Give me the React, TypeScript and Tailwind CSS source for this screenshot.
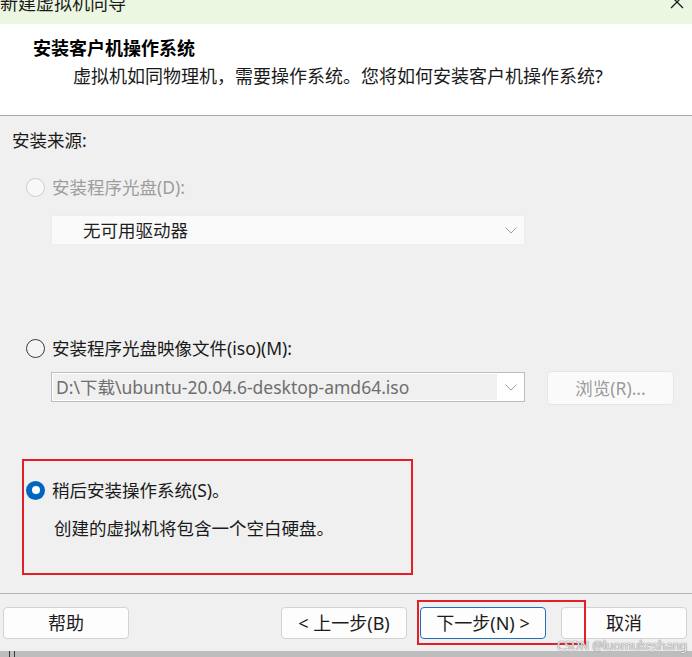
import React from 'react';

const FONT = { fontFamily: '"Noto Sans", "Noto Sans CJK SC", sans-serif' };

const Chevron: React.FC = () => (
  <svg width="12" height="7" viewBox="0 0 12 7" className="shrink-0">
    <path d="M0.5 0.5 L6 6 L11.5 0.5" fill="none" stroke="#a0a0a0" strokeWidth="1" />
  </svg>
);

const Radio: React.FC<{ state: 'disabled' | 'off' | 'on' }> = ({ state }) => {
  if (state === 'on') {
    return (
      <div className="w-[19px] h-[19px] rounded-full bg-[#0067c0] flex items-center justify-center shrink-0">
        <div className="w-[8px] h-[8px] rounded-full bg-white" />
      </div>
    );
  }
  if (state === 'disabled') {
    return <div className="w-[19px] h-[19px] rounded-full border border-[#cdcdcd] bg-[#f8f8f8] shrink-0" />;
  }
  return <div className="w-[19px] h-[19px] rounded-full border border-[#3a3a3a] bg-[#f4f4f4] shrink-0" />;
};

const WizardButton: React.FC<{ label: string; className?: string; primary?: boolean }> = ({ label, className = '', primary }) => (
  <button
    className={`h-[32px] w-[126px] rounded-[4px] bg-[#fdfdfd] text-[18px] text-[#1b1b1b] flex items-center justify-center border ${
      primary ? 'border-[#1f6fbf]' : 'border-[#d3d3d3]'
    } ${className}`}
  >
    {label}
  </button>
);

export default function App() {
  return (
    <div className="w-[692px] h-[657px] overflow-hidden bg-[#f0f0f0] flex flex-col relative" style={FONT}>
      {/* Title bar */}
      <div className="h-[24px] bg-[#ecf7e2] relative overflow-hidden shrink-0">
        <div className="text-[18px] leading-[18px] text-[#1a1a1a] -mt-[6px]">新建虚拟机向导</div>
        <svg width="16" height="16" viewBox="0 0 16 16" className="absolute right-[7px] -top-[6px]">
          <path d="M2 2 L14 14 M14 2 L2 14" stroke="#1a1a1a" strokeWidth="1.3" />
        </svg>
      </div>

      {/* Header */}
      <div className="h-[92px] bg-white border-b border-[#a9a9a9] shrink-0 pt-[13px]">
        <div className="pl-[33px] text-[18px] leading-[22px] font-bold text-black">安装客户机操作系统</div>
        <div className="pl-[73px] mt-[6px] text-[18px] leading-[22px] text-[#1a1a1a]">
          虚拟机如同物理机，需要操作系统。您将如何安装客户机操作系统?
        </div>
      </div>

      {/* Body */}
      <div className="h-[477px] shrink-0 flex flex-col">
        <div className="pl-[12px] mt-[14px] text-[17.5px] leading-[20px] text-[#1a1a1a]">安装来源:</div>

        <div className="flex items-center h-[20px] mt-[27px] pl-[26px] gap-[7px]">
          <Radio state="disabled" />
          <span className="text-[17.5px] text-[#9d9d9d]">安装程序光盘(D):</span>
        </div>

        <div className="ml-[51px] mt-[18px] w-[474px] h-[30px] bg-[#fafafa] border border-[#ededed] flex items-center pl-[31px] pr-[7px]">
          <span className="flex-1 text-[17.5px] text-[#1f1f1f]">无可用驱动器</span>
          <Chevron />
        </div>

        <div className="flex items-center h-[20px] mt-[93px] pl-[26px] gap-[7px]">
          <Radio state="off" />
          <span className="text-[17.5px] text-[#1a1a1a]">安装程序光盘映像文件(iso)(M):</span>
        </div>

        <div className="flex items-start ml-[51px] mt-[13px] gap-[22px]">
          <div className="mt-[1px] w-[474px] h-[30px] bg-white border border-[#bdbdbd] flex items-center p-[1px] pr-[7px]">
            <div className="w-[444px] h-full bg-[#f0f0f0] flex items-center pl-[3px] text-[17.5px] text-[#6e6e6e] whitespace-nowrap overflow-hidden">
              D:\下载\ubuntu-20.04.6-desktop-amd64.iso
            </div>
            <div className="flex-1 flex justify-end">
              <Chevron />
            </div>
          </div>
          <button className="w-[127px] h-[34px] rounded-[4px] bg-[#fafafa] border border-[#e6e6e6] text-[17.5px] text-[#9b9b9b] flex items-center justify-center">
            浏览(R)...
          </button>
        </div>

        <div className="ml-[22px] mt-[54px] w-[391px] h-[116px] border-2 border-[#e3202a] pt-[19px] pl-[2px]">
          <div className="flex items-center h-[20px] gap-[7px]">
            <Radio state="on" />
            <span className="text-[17.5px] text-[#1a1a1a]">稍后安装操作系统(S)。</span>
          </div>
          <div className="mt-[18px] pl-[28px] text-[17.5px] leading-[20px] text-[#1a1a1a]">
            创建的虚拟机将包含一个空白硬盘。
          </div>
        </div>
      </div>

      {/* Footer */}
      <div className="border-t border-[#b4b4b4] h-[58px] shrink-0 flex items-start pt-[13px] pl-[3px]">
        <WizardButton label="帮助" />
        <WizardButton label="< 上一步(B)" className="ml-[152px]" />
        <WizardButton label="下一步(N) >" className="ml-[13px]" primary />
        <WizardButton label="取消" className="ml-[15px]" />
      </div>

      {/* Bottom strip */}
      <div className="flex-1 bg-[#bdbdbd] flex pl-[9px] gap-[4px]">
        <div className="w-[1px] h-full bg-[#3a3a3a]" />
        <div className="w-[1px] h-full bg-[#3a3a3a]" />
      </div>

      {/* Highlight around next button */}
      <div className="absolute left-[417px] top-[600px] w-[169px] h-[45px] border-2 border-[#e3202a] pointer-events-none" />

      {/* Watermark */}
      <div
        className="absolute left-[557px] top-[638px] text-[12px] leading-[15px] text-[#ececec] whitespace-nowrap"
        style={{ textShadow: '0 0 1px #7a7a7a, 0 0 1px #7a7a7a' }}
      >
        CSDN @luomukeshang
      </div>
    </div>
  );
}
